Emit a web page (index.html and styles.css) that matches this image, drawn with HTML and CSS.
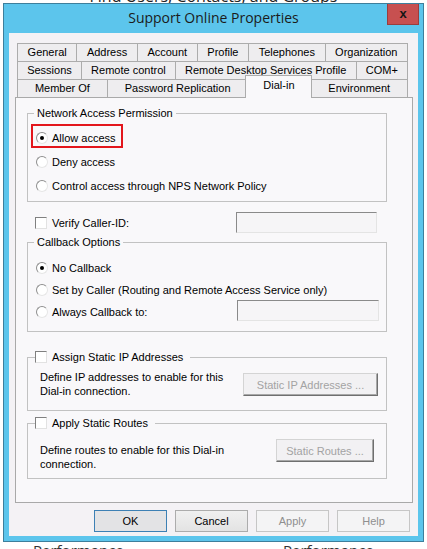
FILE: index.html
```html
<!DOCTYPE html>
<html lang="en">
<head>
  <meta charset="UTF-8" />
  <meta name="viewport" content="width=device-width, initial-scale=1.0"/>
  <title>Support Online Properties</title>
  <link rel="stylesheet" href="styles.css">
</head>
<body>
  <div class="desktop">
    <div class="bg-title">Find Users, Contacts, and Groups</div>
    <div class="bg-footer">
      <span>Performance</span>
      <span>Performance</span>
    </div>

    <div class="window">
      <div class="titlebar">
        <span></span>
        <span class="title">Support Online Properties</span>
        <button class="close">x</button>
      </div>

      <div class="client">
        <div class="tabs">
          <div class="tab-row">
            <div class="tab">General</div>
            <div class="tab">Address</div>
            <div class="tab">Account</div>
            <div class="tab">Profile</div>
            <div class="tab">Telephones</div>
            <div class="tab">Organization</div>
          </div>
          <div class="tab-row">
            <div class="tab">Sessions</div>
            <div class="tab">Remote control</div>
            <div class="tab">Remote Desktop Services Profile</div>
            <div class="tab">COM+</div>
          </div>
          <div class="tab-row">
            <div class="tab">Member Of</div>
            <div class="tab">Password Replication</div>
            <div class="tab selected">Dial-in</div>
            <div class="tab">Environment</div>
          </div>
        </div>

        <div class="panel">
          <fieldset class="group first">
            <legend>Network Access Permission</legend>
            <div class="option highlight"><span class="radio checked"></span>Allow access</div>
            <div class="option"><span class="radio"></span>Deny access</div>
            <div class="option"><span class="radio"></span>Control access through NPS Network Policy</div>
          </fieldset>

          <div class="verify-row">
            <span class="checkbox"></span>
            <span class="label">Verify Caller-ID:</span>
            <span class="textbox verify-box"></span>
          </div>

          <fieldset class="group callback">
            <legend>Callback Options</legend>
            <div class="field-row"><div class="option"><span class="radio checked"></span>No Callback</div></div>
            <div class="field-row"><div class="option"><span class="radio"></span>Set by Caller (Routing and Remote Access Service only)</div></div>
            <div class="field-row">
              <div class="option"><span class="radio"></span>Always Callback to:</div>
              <span class="textbox callback-box"></span>
            </div>
          </fieldset>

          <fieldset class="group static-ip">
            <legend class="check-legend"><span class="checkbox"></span>Assign Static IP Addresses</legend>
            <div class="group-body">
              <p class="desc">Define IP addresses to enable for this<br>Dial-in connection.</p>
              <button class="btn-classic ip-btn">Static IP Addresses ...</button>
            </div>
          </fieldset>

          <fieldset class="group static-routes">
            <legend class="check-legend"><span class="checkbox"></span>Apply Static Routes</legend>
            <div class="group-body">
              <p class="desc">Define routes to enable for this Dial-in<br>connection.</p>
              <button class="btn-classic routes-btn">Static Routes ...</button>
            </div>
          </fieldset>
        </div>

        <div class="actions">
          <button class="btn default">OK</button>
          <button class="btn">Cancel</button>
          <button class="btn disabled">Apply</button>
          <button class="btn disabled">Help</button>
        </div>
      </div>
    </div>
  </div>
</body>
</html>
```

FILE: styles.css
```css
body {
  margin: 0;
  background: #fff;
  font-family: "Liberation Sans", Arial, sans-serif;
  font-size: 11px;
  color: #000;
  overflow: hidden;
}
.desktop {
  position: relative;
  width: 427px;
  height: 549px;
  overflow: hidden;
  display: flex;
  flex-direction: column;
}
.bg-title {
  margin-top: -15px;
  text-align: center;
  font-family: "Open Sans", sans-serif;
  font-size: 16px;
  color: #222;
}
.bg-footer {
  margin-top: auto;
  margin-bottom: -11px;
  display: flex;
  font-family: "Open Sans", sans-serif;
  font-size: 15px;
  color: #333;
}
.bg-footer span {
  width: 217px;
  padding-left: 33px;
}
.bg-footer span:last-child {
  width: auto;
}
.window {
  position: absolute;
  left: 3px;
  top: 3px;
  width: 421px;
  height: 539px;
  box-sizing: border-box;
  border: 1px solid #3d7f9c;
  background: #5cc5ec;
  display: flex;
  flex-direction: column;
  padding-bottom: 5px;
}
.titlebar {
  height: 29px;
  display: grid;
  grid-template-columns: 1fr auto 1fr;
  align-items: start;
}
.title {
  font-family: "Open Sans", sans-serif;
  font-size: 14px;
  color: #1b1b1b;
  line-height: 27px;
}
.close {
  justify-self: end;
  width: 32px;
  height: 21px;
  margin-right: 4px;
  padding: 0;
  background: #c75050;
  border: 1px solid #9a3d3d;
  border-top: none;
  font-family: "Liberation Sans", Arial, sans-serif;
  font-weight: bold;
  font-size: 13px;
  line-height: 16px;
  color: #151515;
}
.client {
  flex: 1;
  margin: 0 5px;
  background: #f4f2f5;
  padding: 10px 5px 4px 6px;
  display: flex;
  flex-direction: column;
}
.tabs {
  margin: 0 5px 0 2px;
}
.tab-row {
  display: flex;
  height: 18px;
  align-items: flex-end;
}
.tab {
  flex: 1 1 auto;
  height: 18px;
  box-sizing: border-box;
  border-top: 1px solid #acacac;
  border-left: 1px solid #acacac;
  background: #eeedef;
  text-align: center;
  line-height: 17px;
  white-space: nowrap;
  padding: 0 4px;
}
.tab:last-child {
  border-right: 1px solid #acacac;
}
.tab.selected {
  position: relative;
  z-index: 1;
  height: 23px;
  margin: 0 -2px -1px;
  border-right: 1px solid #acacac;
  background: #f9f8fa;
  line-height: 13px;
  padding-top: 3px;
}
.panel {
  flex: 1;
  border: 1px solid #a9a9a9;
  background: #f9f8fa;
  padding: 0 25px 0 11px;
}
.group {
  margin: 0;
  min-width: 0;
  border: 1px solid #c2c2c2;
  padding: 4px 0 5px 3px;
}
.group legend {
  margin-left: 3px;
  padding: 0 3px;
  line-height: 13px;
}
.group.first {
  margin-top: 9px;
}
.option {
  display: flex;
  align-items: center;
  gap: 4px;
  width: fit-content;
  height: 24px;
  box-sizing: border-box;
  border: 2px solid transparent;
  padding: 3px 5px 0 3px;
  white-space: nowrap;
}
.option.highlight {
  border-color: #e3161c;
}
.radio {
  width: 12px;
  height: 12px;
  box-sizing: border-box;
  border-radius: 50%;
  border: 1px solid;
  border-color: #8e8e8e #e6e6e6 #e6e6e6 #8e8e8e;
  background: #fff;
  display: flex;
  align-items: center;
  justify-content: center;
}
.radio.checked::after {
  content: "";
  width: 4px;
  height: 4px;
  border-radius: 50%;
  background: #000;
}
.checkbox {
  width: 12px;
  height: 12px;
  box-sizing: border-box;
  border: 1px solid;
  border-color: #808080 #e2e2e2 #e2e2e2 #808080;
  background: #fff;
  flex: none;
}
.verify-row {
  display: flex;
  align-items: center;
  height: 21px;
  margin-top: 10px;
  padding-left: 8px;
}
.verify-row .label {
  margin-left: 5px;
}
.textbox {
  height: 21px;
  box-sizing: border-box;
  border: 1px solid;
  border-color: #8a8a8a #e4e4e4 #e4e4e4 #8a8a8a;
  background: #f6f5f7;
}
.verify-box {
  width: 141px;
  margin-left: auto;
  margin-right: 10px;
}
.group.callback {
  margin-top: 3px;
  padding-top: 6px;
  padding-bottom: 10px;
}
.field-row {
  display: flex;
  align-items: center;
  height: 22px;
}
.callback-box {
  width: 142px;
  margin-left: auto;
  margin-right: 7px;
}
.check-legend {
  display: flex;
  align-items: center;
  gap: 5px;
}
.group .check-legend {
  margin-left: 4px;
  padding: 0 7px 0 0;
  line-height: 14px;
}
.group-body {
  display: flex;
  align-items: flex-start;
}
.desc {
  margin: 0;
  padding-left: 9px;
  line-height: 14px;
  white-space: nowrap;
}
.group.static-ip {
  margin-top: 18px;
  padding-top: 6px;
  padding-bottom: 12px;
}
.group.static-routes {
  margin-top: 5px;
  padding-top: 13px;
  padding-bottom: 7px;
}
.btn-classic {
  height: 23px;
  box-sizing: border-box;
  border: 1px solid;
  border-color: #d4d4d4 #6f6f6f #6f6f6f #d4d4d4;
  box-shadow: inset -1px -1px #a8a8a8;
  background: #f2f1f3;
  font-family: "Liberation Sans", Arial, sans-serif;
  font-size: 11px;
  color: #a3a3a3;
  padding: 0;
  margin-left: auto;
}
.ip-btn {
  width: 135px;
  margin-top: 3px;
  margin-right: 8px;
}
.routes-btn {
  width: 98px;
  margin-top: -4px;
  margin-right: 12px;
}
.actions {
  display: flex;
  justify-content: flex-end;
  gap: 8px;
  padding: 7px 3px 0 0;
}
.btn {
  width: 73px;
  height: 22px;
  box-sizing: border-box;
  border: 1px solid #acacac;
  background: linear-gradient(#f0f0f0, #e3e3e3);
  font-family: "Liberation Sans", Arial, sans-serif;
  font-size: 11px;
  color: #000;
  padding: 0;
}
.btn.default {
  border-color: #3d80b4;
  background: #e3e3e5;
}
.btn.disabled {
  border-color: #c6c6c6;
  background: #f4f4f5;
  color: #8f8f8f;
}
```
